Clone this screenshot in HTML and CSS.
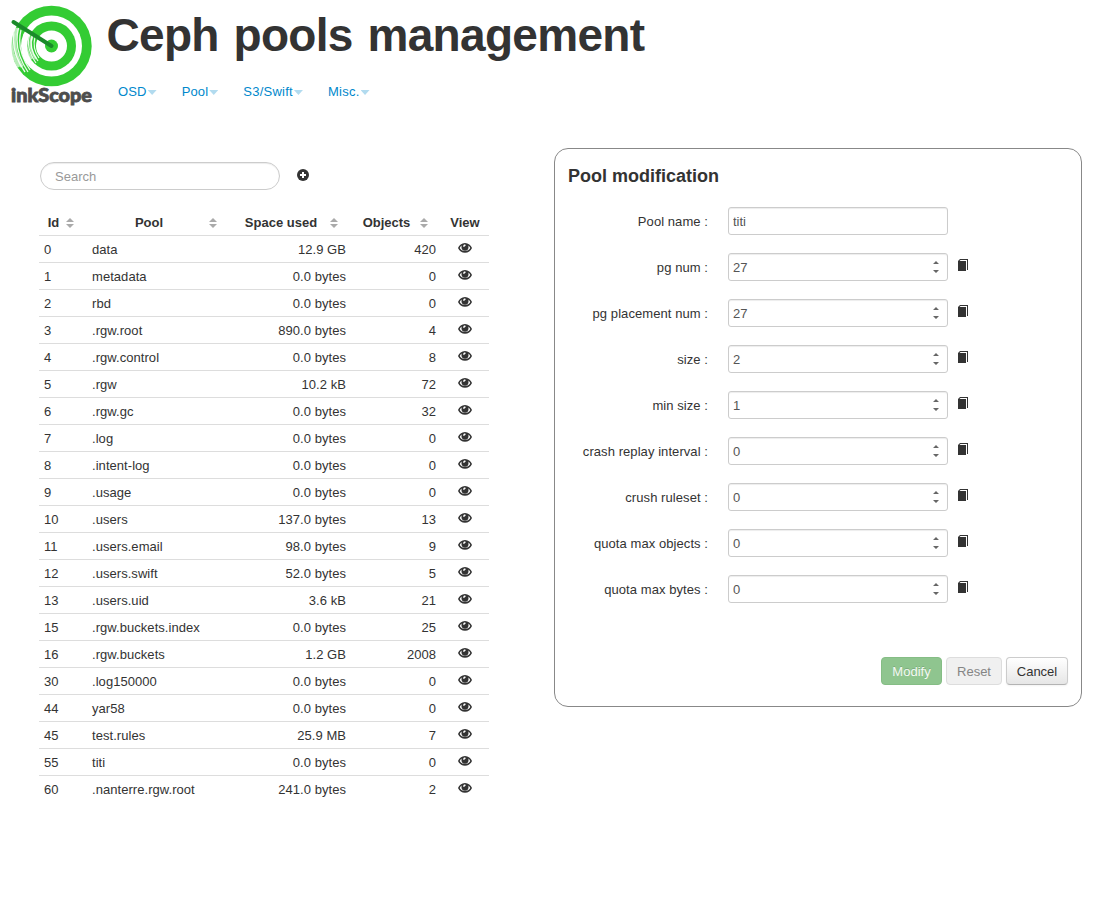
FILE: index.html
```html
<!DOCTYPE html>
<html lang="en">
<head>
<meta charset="utf-8">
<title>Ceph pools management</title>
<link rel="stylesheet" href="styles.css">
</head>
<body>
<svg class="sprite" aria-hidden="true">
  <symbol id="eye" viewBox="0 0 14 10">
    <path fill="#333" fill-rule="evenodd" d="M7 0C3.700 0 1.200 2.300 0 4.900 1.300 7.900 3.800 9.800 7 9.800s5.700-1.900 7-4.900C12.800 2.300 10.300 0 7 0ZM1.700 5C2.200 3.900 2.900 3 3.700 2.400c-.5 1.600-.2 3.600 1 4.500 1.300 1 3.300 1 4.600 0 1.200-.9 1.500-2.900 1-4.500.8.600 1.500 1.500 2 2.600C11.300 7 9.500 7.900 7 7.900S2.700 7 1.700 5ZM6.300 1.500c.8-.3 1.500 0 1.500.6S7 2.900 6.600 3.500C6.300 4.100 5.300 4 5.200 3.300c0-.8.400-1.500 1.100-1.800Z"/>
  </symbol>
  <symbol id="book" viewBox="0 0 10 12">
    <path fill="#333" d="M0 2 2 0h8v11H9V1H2.500L1.500 2H8v10H0Z"/>
  </symbol>
  <symbol id="spin" viewBox="0 0 6 12">
    <path fill="#666" d="M0 3 3 0l3 3ZM0 9h6l-3 3Z"/>
  </symbol>
</svg>
<header class="header">
  <svg class="logo" width="84" height="102" viewBox="0 0 84 102" role="img" aria-label="inkScope">
    <circle cx="41.500" cy="41" r="40.200" fill="#3c3"/>
    <circle cx="41.500" cy="41" r="30.500" fill="#fff"/>
    <circle cx="41.500" cy="41" r="24.500" fill="#3c3"/>
    <circle cx="41.500" cy="41" r="15.500" fill="#fff"/>
    <circle cx="41.500" cy="41" r="6.500" fill="#3c3"/>
    <g fill="none" stroke="#fff">
      <path stroke-width="3" opacity=".65" d="M3 21Q-3 42 9 62M7 23Q1 42 12 62"/>
      <path stroke-width="1.300" opacity=".9" d="M5 22Q-1 45 15 67M8.500 23Q3 45 18 67M11 25Q6 45 20 65"/>
      <path stroke-width="2.500" opacity=".6" d="M18 29Q13 43 22 54M22 31Q18 43 26 54"/>
      <path stroke-width="1.200" opacity=".9" d="M20 29Q15 42 26 58M22.500 30Q18 43 28 56M25 32Q22 43 29 53"/>
    </g>
    <path d="M3.500 17 41.500 41" stroke="#1a8a2a" stroke-width="4" stroke-linecap="round"/>
    <text class="logo-text" x="1" y="97" textLength="81" lengthAdjust="spacingAndGlyphs">inkScope</text>
  </svg>
  <div>
    <h1 class="title">Ceph pools management</h1>
    <nav class="menu">
      <a class="menu-item">OSD</a>
      <a class="menu-item">Pool</a>
      <a class="menu-item">S3/Swift</a>
      <a class="menu-item">Misc.</a>
    </nav>
  </div>
</header>
<main class="content">
  <section class="list">
    <div class="toolbar">
      <input class="search" type="text" placeholder="Search">
      <svg class="plus" width="12" height="12" viewBox="0 0 12 12"><circle cx="6" cy="6" r="6" fill="#333"/><path d="M6 3v6M3 6h6" stroke="#fff" stroke-width="2"/></svg>
    </div>
    <table class="pools">
      <colgroup><col class="c-id"><col class="c-pool"><col class="c-space"><col class="c-objects"><col class="c-view"></colgroup>
      <thead><tr><th class="sort">Id</th><th class="sort">Pool</th><th class="sort">Space used</th><th class="sort">Objects</th><th>View</th></tr></thead>
      <tbody id="pool-rows"></tbody>
    </table>
  </section>
  <form class="panel">
    <h2 class="panel-title">Pool modification</h2>
    <div id="fields"></div>
    <div class="actions">
      <button type="button" class="btn btn-modify">Modify</button>
      <button type="button" class="btn btn-reset">Reset</button>
      <button type="button" class="btn btn-cancel">Cancel</button>
    </div>
  </form>
</main>
<script src="pools.js"></script>
</body>
</html>
```

FILE: styles.css
```css
* { box-sizing: border-box; }
body { margin: 0; background: #fff; color: #333; font: 13px/20px "Liberation Sans", Arial, sans-serif; }
.sprite { display: none; }
.header { display: flex; height: 148px; padding: 5px 0 0 10px; }
.logo { flex: none; margin-right: 12px; }
.logo-text { font: 900 18px "Lato", sans-serif; fill: #4d4d4d; stroke: #4d4d4d; stroke-width: .8px; }
.title { margin: 0; padding-left: .5px; font-size: 46px; line-height: 60px; letter-spacing: -.68px; word-spacing: 2.6px; white-space: nowrap; }
.menu { display: flex; gap: 25px; padding: 17px 0 0 12px; }
.menu-item { display: flex; align-items: center; color: #08c; letter-spacing: .15px; }
.menu-item::after { content: ""; margin: 1px 0 0 1px; border: solid transparent; border-width: 5px 4.5px 0; border-top-color: #b2dbef; width: 9px; height: 5px; background: #b2dbef; background-clip: border-box; border: 0; clip-path: polygon(0 0, 100% 0, 50% 100%); }
.menu-item:nth-child(3) { letter-spacing: .25px; }
.menu-item:nth-child(4) { letter-spacing: .25px; }
.content { display: flex; align-items: flex-start; }
.list { width: 450px; margin: 14px 65px 0 39px; }
.toolbar { display: flex; align-items: center; height: 28px; padding-left: 1px; }
.search, .input { height: 28px; border: 1px solid #ccc; background: #fff; box-shadow: inset 0 1px 1px rgba(0,0,0,.075); color: #555; font: inherit; outline: 0; }
.search { width: 240px; border-radius: 14px; padding: 0 14px; }
.search::placeholder { color: #999; }
.plus { margin: 0 0 2px 17px; }
.pools { width: 450px; margin-top: 18px; table-layout: fixed; border-collapse: collapse; }
.c-id { width: 48px; } .c-pool { width: 143px; } .c-space { width: 121px; } .c-objects { width: 90px; } .c-view { width: 48px; }
.pools th, .pools td { height: 27px; padding: 2px 5px 0; line-height: 20px; white-space: nowrap; }
.pools th { padding: 4px 4px 0; }
.pools td { border-top: 1px solid #ddd; text-align: left; letter-spacing: .05px; }
.pools .num { text-align: right; }
.pools .view { text-align: center; }
.pools .sort { position: relative; padding-right: 23px; }
.sort::before, .sort::after { content: ""; position: absolute; right: 13px; border: 4px solid transparent; }
.sort::before { top: 10px; border-width: 0 4px 4px; border-bottom-color: #aaa; }
.sort::after { top: 16px; border-width: 4px 4px 0; border-top-color: #aaa; }
.eye { display: block; width: 14px; height: 10px; margin: -3px auto 0; }
.panel { width: 528px; height: 559px; border: 1px solid #888; border-radius: 14px; padding: 12px 13px; }
.panel-title { margin: 0 0 16px; font-size: 18px; line-height: 30px; }
.field { display: flex; align-items: center; height: 28px; margin-bottom: 18px; }
.label { width: 140px; margin-right: 20px; padding-top: 1px; text-align: right; letter-spacing: .07px; }
.control { position: relative; width: 220px; height: 28px; }
.input { width: 220px; border-radius: 3px; padding: 1px 4px 0; }
.spin { position: absolute; right: 9px; top: 8px; width: 6px; height: 12px; }
.book { width: 10px; height: 12px; margin: 0 0 4px 10px; }
.actions { display: flex; justify-content: flex-end; gap: 4px; padding-top: 36px; }
.btn { height: 28px; padding: 1px 0 0; border: 1px solid; border-radius: 4px; font: inherit; }
.btn-modify { width: 61px; color: #f4faf4; background: #8fc58f; border-color: #85bd85; text-shadow: 0 -1px 0 rgba(0,0,0,.15); }
.btn-reset { width: 56px; color: #858585; background: #f0f0f0; border-color: #ddd; }
.btn-cancel { width: 62px; color: #333; background: linear-gradient(#fff, #e6e6e6); border-color: #ccc #ccc #b3b3b3; box-shadow: 0 1px 2px rgba(0,0,0,.05); }
```

FILE: pools.js
```javascript
const pools = [
  [0, "data", "12.9 GB", 420], [1, "metadata", "0.0 bytes", 0], [2, "rbd", "0.0 bytes", 0],
  [3, ".rgw.root", "890.0 bytes", 4], [4, ".rgw.control", "0.0 bytes", 8], [5, ".rgw", "10.2 kB", 72],
  [6, ".rgw.gc", "0.0 bytes", 32], [7, ".log", "0.0 bytes", 0], [8, ".intent-log", "0.0 bytes", 0],
  [9, ".usage", "0.0 bytes", 0], [10, ".users", "137.0 bytes", 13], [11, ".users.email", "98.0 bytes", 9],
  [12, ".users.swift", "52.0 bytes", 5], [13, ".users.uid", "3.6 kB", 21], [15, ".rgw.buckets.index", "0.0 bytes", 25],
  [16, ".rgw.buckets", "1.2 GB", 2008], [30, ".log150000", "0.0 bytes", 0], [44, "yar58", "0.0 bytes", 0],
  [45, "test.rules", "25.9 MB", 7], [55, "titi", "0.0 bytes", 0], [60, ".nanterre.rgw.root", "241.0 bytes", 2]
];
document.getElementById("pool-rows").innerHTML = pools.map(([id, name, space, objects]) =>
  `<tr><td>${id}</td><td>${name}</td><td class="num">${space}</td><td class="num">${objects}</td><td class="view"><svg class="eye"><use href="#eye"/></svg></td></tr>`).join("");

const fields = [
  ["Pool name", "titi"], ["pg num", "27"], ["pg placement num", "27"], ["size", "2"], ["min size", "1"],
  ["crash replay interval", "0"], ["crush ruleset", "0"], ["quota max objects", "0"], ["quota max bytes", "0"]
];
document.getElementById("fields").innerHTML = fields.map(([label, value], i) =>
  `<div class="field"><label class="label">${label} :</label><div class="control"><input class="input" value="${value}">${i ? '<svg class="spin"><use href="#spin"/></svg>' : ""}</div>${i ? '<svg class="book"><use href="#book"/></svg>' : ""}</div>`).join("");
```
